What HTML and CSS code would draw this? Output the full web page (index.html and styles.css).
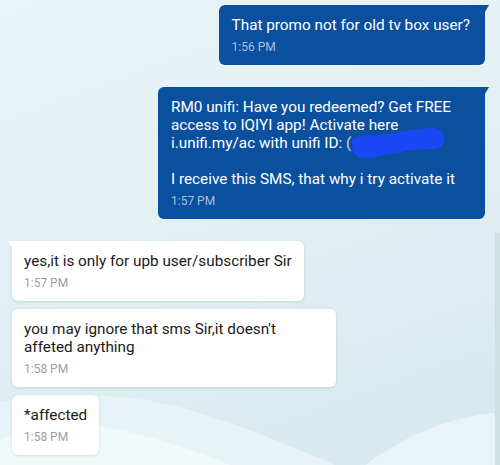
FILE: index.html
```html
<!DOCTYPE html>
<html lang="en">
<head>
  <meta charset="UTF-8">
  <title>Chat</title>
  <link rel="stylesheet" href="styles.css">
</head>
<body>

  <!-- background waves -->
  <svg class="waves" width="500" height="465" viewBox="0 0 500 465">
    <path d="M0 402 C 60 392, 130 392, 190 410 C 250 428, 300 450, 335 465 L 0 465 Z" fill="#e7f3f6"/>
    <path d="M0 440 C 30 425, 70 420, 110 428 C 160 438, 200 452, 230 465 L 0 465 Z" fill="#f1f9fa"/>
    <path d="M365 465 C 400 440, 440 418, 500 412 L 500 465 Z" fill="#e9f4f6"/>
  </svg>
  <div class="track"></div>

  <div class="chat">
    <div class="msg out first">
      <div class="text">That promo not for old tv box user?</div>
      <div class="time">1:56 PM</div>
    </div>

    <div class="msg out first gap long">
      <div class="text">RM0 unifi: Have you redeemed? Get FREE<br>access to IQIYI app! Activate here<br>i.unifi.my/ac with unifi ID: <span class="redact">(<svg class="blot" width="96" height="32" viewBox="0 0 96 32"><path d="M3 15 C 3 10, 10 9, 30 8 C 50 6, 68 1, 84 1 C 93 1, 96 8, 95 14 C 94 21, 87 23, 79 22 C 60 22, 40 28, 20 31 C 8 32, 3 26, 3 20 Z" fill="#1a48f4"/></svg></span><br><br>I receive this SMS, that why i try activate it</div>
      <div class="time">1:57 PM</div>
    </div>

    <div class="msg in first gap">
      <div class="text">yes,it is only for upb user/subscriber Sir</div>
      <div class="time">1:57 PM</div>
    </div>

    <div class="msg in">
      <div class="text">you may ignore that sms Sir,it doesn't affeted anything</div>
      <div class="time">1:58 PM</div>
    </div>

    <div class="msg in">
      <div class="text">*affected</div>
      <div class="time">1:58 PM</div>
    </div>
  </div>

</body>
</html>
```

FILE: styles.css
```css
body {
  margin: 0;
  width: 500px;
  height: 465px;
  overflow: hidden;
  font-family: Roboto, "Noto Sans", sans-serif;
  background: linear-gradient(160deg, #eaf4f7 0%, #e0eef2 55%, #d6e9ee 100%);
  position: relative;
}
.waves { position: absolute; left: 0; top: 0; }
.track {
  position: absolute;
  right: 0;
  top: 233px;
  width: 5px;
  height: 232px;
  background: #d0e1e4;
}
.chat {
  position: relative;
  display: flex;
  flex-direction: column;
  gap: 8px;
  padding: 5px 15px 0 12px;
}
.msg {
  position: relative;
  border-radius: 6px;
  padding: 11px 15px 10px 13px;
}
.msg.gap { margin-top: 14px; }
.msg .text { font-size: 15.3px; line-height: 18px; }
.msg .time { font-size: 12px; line-height: 16px; margin-top: 5px; }

.out {
  align-self: flex-end;
  max-width: 299px;
  background: #0b4f9f;
  color: #fff;
}
.out.long { width: 299px; }
.out .time { color: #a9bfdc; }
.out.first { border-top-right-radius: 0; }
.out.first::after {
  content: "";
  position: absolute;
  top: 0;
  right: -4px;
  border-top: 7px solid #0b4f9f;
  border-right: 4px solid transparent;
}

.in {
  align-self: flex-start;
  max-width: 300px;
  padding-left: 12px;
  padding-right: 12px;
  background: #fff;
  color: #1b1b1b;
  box-shadow: 0 1px 3px rgba(60, 100, 110, 0.18);
}
.in .time { color: #9e9e9e; }
.in.first { border-top-left-radius: 0; }
.in.first::before {
  content: "";
  position: absolute;
  top: 0;
  left: -4px;
  border-top: 7px solid #fff;
  border-left: 4px solid transparent;
}

.redact { position: relative; color: #c9d3e6; }
.blot {
  position: absolute;
  left: 3px;
  top: -7px;
}
```
